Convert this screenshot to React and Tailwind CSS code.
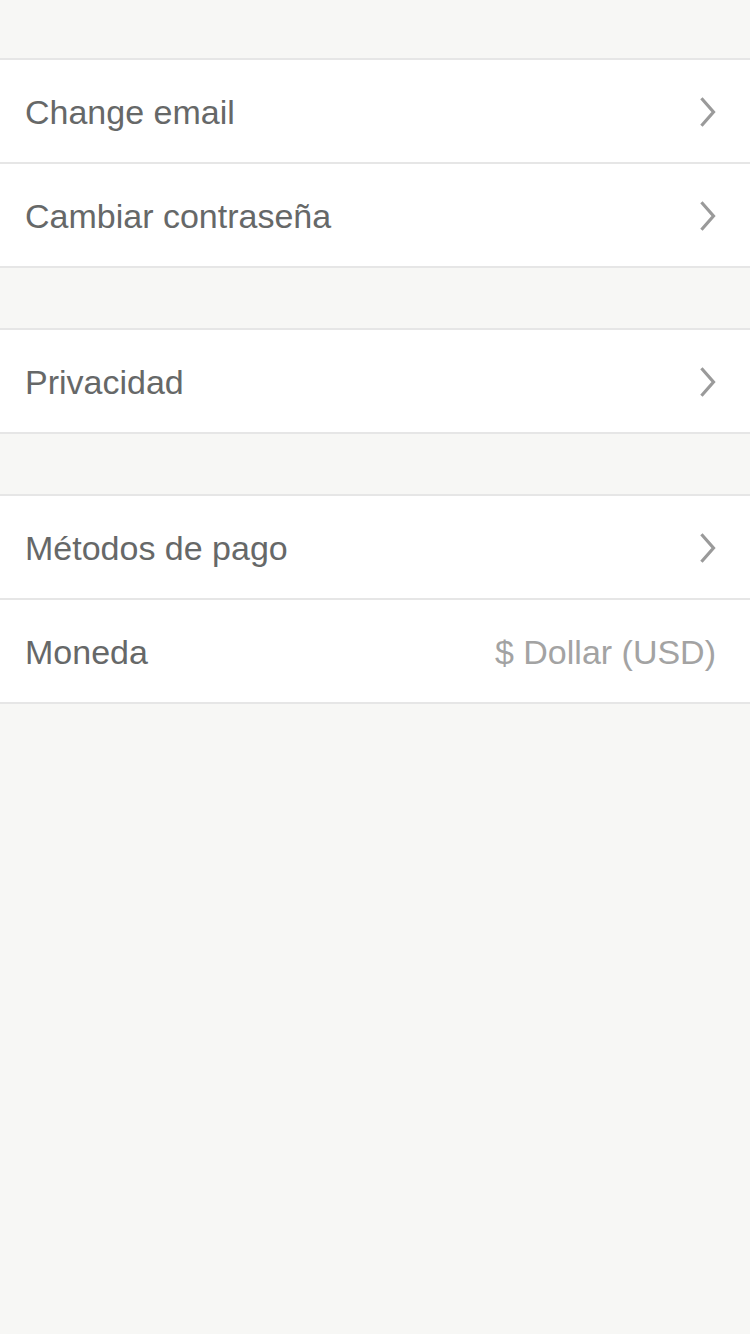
import React from 'react';

const Chevron = () => (
  <svg width="20" height="30" viewBox="0 0 20 30" fill="none" className="shrink-0">
    <path d="M6.5 2.5 L17.5 15 L6.5 27.5" stroke="#9a9a9a" strokeWidth="3.2" strokeLinecap="square" strokeLinejoin="miter" />
  </svg>
);

const Row = ({ label, value }) => (
  <div className="flex items-center justify-between h-[104px] pl-[25px] pr-[34px] pt-[2px] bg-white border-b-2 border-[#e6e6e6]">
    <span className="text-[34px] text-[#666868]">{label}</span>
    {value ? <span className="text-[34px] text-[#a3a3a3]">{value}</span> : <Chevron />}
  </div>
);

const Group = ({ items }) => (
  <div className="border-t-2 border-[#e6e6e6] bg-white">
    {items.map((it) => (
      <Row key={it.label} {...it} />
    ))}
  </div>
);

export default function App() {
  return (
    <div className="min-h-[1334px] w-[750px] bg-[#f7f7f5] pt-[58px] flex flex-col gap-[60px]" style={{ fontFamily: '"Liberation Sans", Arial, sans-serif' }}>
      <Group items={[{ label: 'Change email' }, { label: 'Cambiar contraseña' }]} />
      <Group items={[{ label: 'Privacidad' }]} />
      <Group items={[{ label: 'Métodos de pago' }, { label: 'Moneda', value: '$ Dollar (USD)' }]} />
    </div>
  );
}
